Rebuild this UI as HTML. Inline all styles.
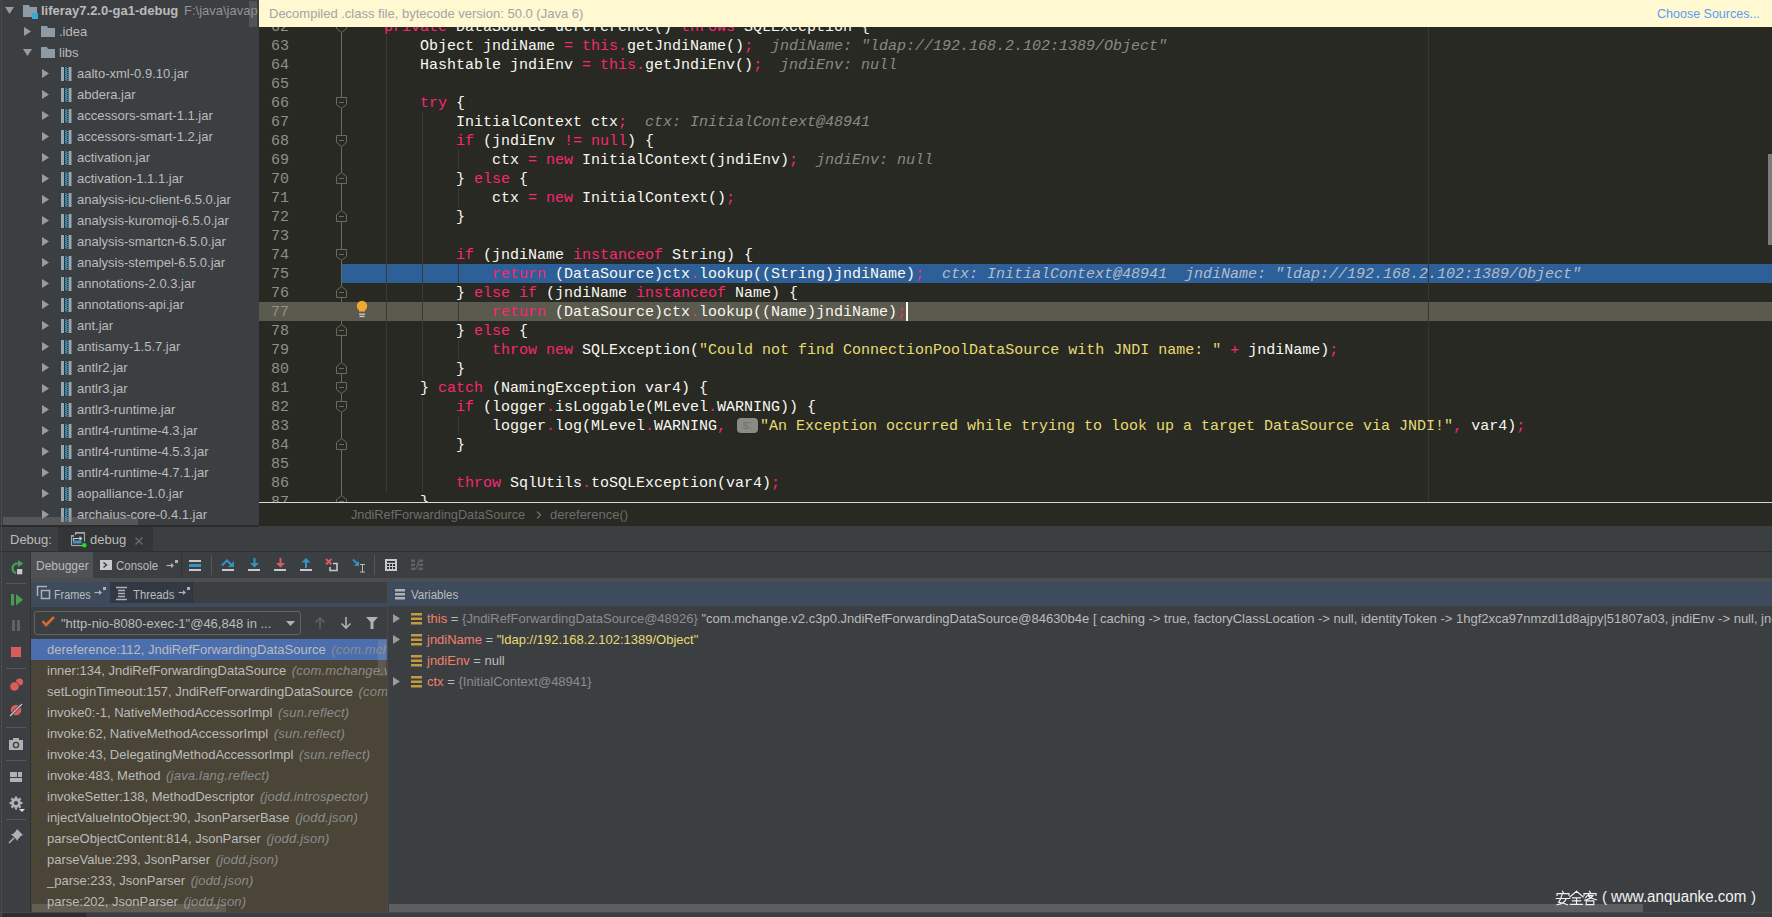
<!DOCTYPE html><html><head><meta charset="utf-8"><style>
*{margin:0;padding:0;box-sizing:border-box}
html,body{width:1772px;height:917px;overflow:hidden;background:#3c3f41;position:relative;font-family:"Liberation Sans",sans-serif;font-size:13px;color:#bbbbbb}
.a{position:absolute}
.code{position:absolute;font-family:"Liberation Mono",monospace;font-size:15px;line-height:19px;white-space:pre;color:#f8f8f2;height:19px}
.k{color:#f92672}
.s{color:#e6db74}
.hint{position:absolute;font-family:"Liberation Mono",monospace;font-size:15px;line-height:19px;white-space:pre;color:#8b8a80;font-style:italic;height:19px}
.ln{position:absolute;font-family:"Liberation Mono",monospace;font-size:15px;line-height:19px;color:#8f908a;width:40px;text-align:right;left:249px;height:19px}
.tr{position:absolute;white-space:pre;line-height:21px;height:21px}
.guide{position:absolute;width:1px;background:#3b3a32}
</style></head><body>
<div class="a" style="left:0;top:0;width:259px;height:526px;background:#3c3f41;overflow:hidden">
<svg class="a" style="left:5px;top:6px" width="10" height="10"><path d="M0 1 L9 1 L4.5 8 Z" fill="#9b9b9b"/></svg>
<svg class="a" style="left:23px;top:5px" width="18" height="14"><path d="M0 0 H6 L7 2 H14 V12 H0 Z" fill="#8e9ba4"/><rect x="9" y="8" width="6" height="6" fill="#3aa8d8"/></svg>
<div class="tr" style="left:41px;top:0px;font-weight:bold;color:#bbbbbb">liferay7.2.0-ga1-debug</div>
<div class="tr" style="left:184px;top:0px;color:#939393;transform:scaleX(1.0);transform-origin:0 0">F:\java\javap</div>
<svg class="a" style="left:23px;top:27px" width="10" height="10"><path d="M1 0 L8 4.5 L1 9 Z" fill="#9b9b9b"/></svg>
<svg class="a" style="left:41px;top:25px" width="16" height="14"><path d="M0 1 H6 L7 3 H14 V12 H0 Z" fill="#8e9ba4"/></svg>
<div class="tr" style="left:59px;top:21px">.idea</div>
<svg class="a" style="left:23px;top:48px" width="10" height="10"><path d="M0 1 L9 1 L4.5 8 Z" fill="#9b9b9b"/></svg>
<svg class="a" style="left:41px;top:46px" width="16" height="14"><path d="M0 1 H6 L7 3 H14 V12 H0 Z" fill="#8e9ba4"/></svg>
<div class="tr" style="left:59px;top:42px">libs</div>
<svg class="a" style="left:41px;top:69px" width="10" height="10"><path d="M1 0 L8 4.5 L1 9 Z" fill="#9b9b9b"/></svg>
<svg class="a" style="left:61px;top:67px" width="11" height="15"><rect x="0" y="0" width="10.5" height="14" fill="#9aa7b0"/><rect x="3" y="0" width="4.5" height="14" fill="#2f3336"/><path d="M4 0.5 L6.5 1.5 L4 2.5 L6.5 3.5 L4 4.5 L6.5 5.5 L4 6.5 L6.5 7.5 L4 8.5 L6.5 9.5 L4 10.5 L6.5 11.5 L4 12.5 L6.5 13.5" fill="none" stroke="#3aa8d8" stroke-width="1"/></svg>
<div class="tr" style="left:77px;top:63px">aalto-xml-0.9.10.jar</div>
<svg class="a" style="left:41px;top:90px" width="10" height="10"><path d="M1 0 L8 4.5 L1 9 Z" fill="#9b9b9b"/></svg>
<svg class="a" style="left:61px;top:88px" width="11" height="15"><rect x="0" y="0" width="10.5" height="14" fill="#9aa7b0"/><rect x="3" y="0" width="4.5" height="14" fill="#2f3336"/><path d="M4 0.5 L6.5 1.5 L4 2.5 L6.5 3.5 L4 4.5 L6.5 5.5 L4 6.5 L6.5 7.5 L4 8.5 L6.5 9.5 L4 10.5 L6.5 11.5 L4 12.5 L6.5 13.5" fill="none" stroke="#3aa8d8" stroke-width="1"/></svg>
<div class="tr" style="left:77px;top:84px">abdera.jar</div>
<svg class="a" style="left:41px;top:111px" width="10" height="10"><path d="M1 0 L8 4.5 L1 9 Z" fill="#9b9b9b"/></svg>
<svg class="a" style="left:61px;top:109px" width="11" height="15"><rect x="0" y="0" width="10.5" height="14" fill="#9aa7b0"/><rect x="3" y="0" width="4.5" height="14" fill="#2f3336"/><path d="M4 0.5 L6.5 1.5 L4 2.5 L6.5 3.5 L4 4.5 L6.5 5.5 L4 6.5 L6.5 7.5 L4 8.5 L6.5 9.5 L4 10.5 L6.5 11.5 L4 12.5 L6.5 13.5" fill="none" stroke="#3aa8d8" stroke-width="1"/></svg>
<div class="tr" style="left:77px;top:105px">accessors-smart-1.1.jar</div>
<svg class="a" style="left:41px;top:132px" width="10" height="10"><path d="M1 0 L8 4.5 L1 9 Z" fill="#9b9b9b"/></svg>
<svg class="a" style="left:61px;top:130px" width="11" height="15"><rect x="0" y="0" width="10.5" height="14" fill="#9aa7b0"/><rect x="3" y="0" width="4.5" height="14" fill="#2f3336"/><path d="M4 0.5 L6.5 1.5 L4 2.5 L6.5 3.5 L4 4.5 L6.5 5.5 L4 6.5 L6.5 7.5 L4 8.5 L6.5 9.5 L4 10.5 L6.5 11.5 L4 12.5 L6.5 13.5" fill="none" stroke="#3aa8d8" stroke-width="1"/></svg>
<div class="tr" style="left:77px;top:126px">accessors-smart-1.2.jar</div>
<svg class="a" style="left:41px;top:153px" width="10" height="10"><path d="M1 0 L8 4.5 L1 9 Z" fill="#9b9b9b"/></svg>
<svg class="a" style="left:61px;top:151px" width="11" height="15"><rect x="0" y="0" width="10.5" height="14" fill="#9aa7b0"/><rect x="3" y="0" width="4.5" height="14" fill="#2f3336"/><path d="M4 0.5 L6.5 1.5 L4 2.5 L6.5 3.5 L4 4.5 L6.5 5.5 L4 6.5 L6.5 7.5 L4 8.5 L6.5 9.5 L4 10.5 L6.5 11.5 L4 12.5 L6.5 13.5" fill="none" stroke="#3aa8d8" stroke-width="1"/></svg>
<div class="tr" style="left:77px;top:147px">activation.jar</div>
<svg class="a" style="left:41px;top:174px" width="10" height="10"><path d="M1 0 L8 4.5 L1 9 Z" fill="#9b9b9b"/></svg>
<svg class="a" style="left:61px;top:172px" width="11" height="15"><rect x="0" y="0" width="10.5" height="14" fill="#9aa7b0"/><rect x="3" y="0" width="4.5" height="14" fill="#2f3336"/><path d="M4 0.5 L6.5 1.5 L4 2.5 L6.5 3.5 L4 4.5 L6.5 5.5 L4 6.5 L6.5 7.5 L4 8.5 L6.5 9.5 L4 10.5 L6.5 11.5 L4 12.5 L6.5 13.5" fill="none" stroke="#3aa8d8" stroke-width="1"/></svg>
<div class="tr" style="left:77px;top:168px">activation-1.1.1.jar</div>
<svg class="a" style="left:41px;top:195px" width="10" height="10"><path d="M1 0 L8 4.5 L1 9 Z" fill="#9b9b9b"/></svg>
<svg class="a" style="left:61px;top:193px" width="11" height="15"><rect x="0" y="0" width="10.5" height="14" fill="#9aa7b0"/><rect x="3" y="0" width="4.5" height="14" fill="#2f3336"/><path d="M4 0.5 L6.5 1.5 L4 2.5 L6.5 3.5 L4 4.5 L6.5 5.5 L4 6.5 L6.5 7.5 L4 8.5 L6.5 9.5 L4 10.5 L6.5 11.5 L4 12.5 L6.5 13.5" fill="none" stroke="#3aa8d8" stroke-width="1"/></svg>
<div class="tr" style="left:77px;top:189px">analysis-icu-client-6.5.0.jar</div>
<svg class="a" style="left:41px;top:216px" width="10" height="10"><path d="M1 0 L8 4.5 L1 9 Z" fill="#9b9b9b"/></svg>
<svg class="a" style="left:61px;top:214px" width="11" height="15"><rect x="0" y="0" width="10.5" height="14" fill="#9aa7b0"/><rect x="3" y="0" width="4.5" height="14" fill="#2f3336"/><path d="M4 0.5 L6.5 1.5 L4 2.5 L6.5 3.5 L4 4.5 L6.5 5.5 L4 6.5 L6.5 7.5 L4 8.5 L6.5 9.5 L4 10.5 L6.5 11.5 L4 12.5 L6.5 13.5" fill="none" stroke="#3aa8d8" stroke-width="1"/></svg>
<div class="tr" style="left:77px;top:210px">analysis-kuromoji-6.5.0.jar</div>
<svg class="a" style="left:41px;top:237px" width="10" height="10"><path d="M1 0 L8 4.5 L1 9 Z" fill="#9b9b9b"/></svg>
<svg class="a" style="left:61px;top:235px" width="11" height="15"><rect x="0" y="0" width="10.5" height="14" fill="#9aa7b0"/><rect x="3" y="0" width="4.5" height="14" fill="#2f3336"/><path d="M4 0.5 L6.5 1.5 L4 2.5 L6.5 3.5 L4 4.5 L6.5 5.5 L4 6.5 L6.5 7.5 L4 8.5 L6.5 9.5 L4 10.5 L6.5 11.5 L4 12.5 L6.5 13.5" fill="none" stroke="#3aa8d8" stroke-width="1"/></svg>
<div class="tr" style="left:77px;top:231px">analysis-smartcn-6.5.0.jar</div>
<svg class="a" style="left:41px;top:258px" width="10" height="10"><path d="M1 0 L8 4.5 L1 9 Z" fill="#9b9b9b"/></svg>
<svg class="a" style="left:61px;top:256px" width="11" height="15"><rect x="0" y="0" width="10.5" height="14" fill="#9aa7b0"/><rect x="3" y="0" width="4.5" height="14" fill="#2f3336"/><path d="M4 0.5 L6.5 1.5 L4 2.5 L6.5 3.5 L4 4.5 L6.5 5.5 L4 6.5 L6.5 7.5 L4 8.5 L6.5 9.5 L4 10.5 L6.5 11.5 L4 12.5 L6.5 13.5" fill="none" stroke="#3aa8d8" stroke-width="1"/></svg>
<div class="tr" style="left:77px;top:252px">analysis-stempel-6.5.0.jar</div>
<svg class="a" style="left:41px;top:279px" width="10" height="10"><path d="M1 0 L8 4.5 L1 9 Z" fill="#9b9b9b"/></svg>
<svg class="a" style="left:61px;top:277px" width="11" height="15"><rect x="0" y="0" width="10.5" height="14" fill="#9aa7b0"/><rect x="3" y="0" width="4.5" height="14" fill="#2f3336"/><path d="M4 0.5 L6.5 1.5 L4 2.5 L6.5 3.5 L4 4.5 L6.5 5.5 L4 6.5 L6.5 7.5 L4 8.5 L6.5 9.5 L4 10.5 L6.5 11.5 L4 12.5 L6.5 13.5" fill="none" stroke="#3aa8d8" stroke-width="1"/></svg>
<div class="tr" style="left:77px;top:273px">annotations-2.0.3.jar</div>
<svg class="a" style="left:41px;top:300px" width="10" height="10"><path d="M1 0 L8 4.5 L1 9 Z" fill="#9b9b9b"/></svg>
<svg class="a" style="left:61px;top:298px" width="11" height="15"><rect x="0" y="0" width="10.5" height="14" fill="#9aa7b0"/><rect x="3" y="0" width="4.5" height="14" fill="#2f3336"/><path d="M4 0.5 L6.5 1.5 L4 2.5 L6.5 3.5 L4 4.5 L6.5 5.5 L4 6.5 L6.5 7.5 L4 8.5 L6.5 9.5 L4 10.5 L6.5 11.5 L4 12.5 L6.5 13.5" fill="none" stroke="#3aa8d8" stroke-width="1"/></svg>
<div class="tr" style="left:77px;top:294px">annotations-api.jar</div>
<svg class="a" style="left:41px;top:321px" width="10" height="10"><path d="M1 0 L8 4.5 L1 9 Z" fill="#9b9b9b"/></svg>
<svg class="a" style="left:61px;top:319px" width="11" height="15"><rect x="0" y="0" width="10.5" height="14" fill="#9aa7b0"/><rect x="3" y="0" width="4.5" height="14" fill="#2f3336"/><path d="M4 0.5 L6.5 1.5 L4 2.5 L6.5 3.5 L4 4.5 L6.5 5.5 L4 6.5 L6.5 7.5 L4 8.5 L6.5 9.5 L4 10.5 L6.5 11.5 L4 12.5 L6.5 13.5" fill="none" stroke="#3aa8d8" stroke-width="1"/></svg>
<div class="tr" style="left:77px;top:315px">ant.jar</div>
<svg class="a" style="left:41px;top:342px" width="10" height="10"><path d="M1 0 L8 4.5 L1 9 Z" fill="#9b9b9b"/></svg>
<svg class="a" style="left:61px;top:340px" width="11" height="15"><rect x="0" y="0" width="10.5" height="14" fill="#9aa7b0"/><rect x="3" y="0" width="4.5" height="14" fill="#2f3336"/><path d="M4 0.5 L6.5 1.5 L4 2.5 L6.5 3.5 L4 4.5 L6.5 5.5 L4 6.5 L6.5 7.5 L4 8.5 L6.5 9.5 L4 10.5 L6.5 11.5 L4 12.5 L6.5 13.5" fill="none" stroke="#3aa8d8" stroke-width="1"/></svg>
<div class="tr" style="left:77px;top:336px">antisamy-1.5.7.jar</div>
<svg class="a" style="left:41px;top:363px" width="10" height="10"><path d="M1 0 L8 4.5 L1 9 Z" fill="#9b9b9b"/></svg>
<svg class="a" style="left:61px;top:361px" width="11" height="15"><rect x="0" y="0" width="10.5" height="14" fill="#9aa7b0"/><rect x="3" y="0" width="4.5" height="14" fill="#2f3336"/><path d="M4 0.5 L6.5 1.5 L4 2.5 L6.5 3.5 L4 4.5 L6.5 5.5 L4 6.5 L6.5 7.5 L4 8.5 L6.5 9.5 L4 10.5 L6.5 11.5 L4 12.5 L6.5 13.5" fill="none" stroke="#3aa8d8" stroke-width="1"/></svg>
<div class="tr" style="left:77px;top:357px">antlr2.jar</div>
<svg class="a" style="left:41px;top:384px" width="10" height="10"><path d="M1 0 L8 4.5 L1 9 Z" fill="#9b9b9b"/></svg>
<svg class="a" style="left:61px;top:382px" width="11" height="15"><rect x="0" y="0" width="10.5" height="14" fill="#9aa7b0"/><rect x="3" y="0" width="4.5" height="14" fill="#2f3336"/><path d="M4 0.5 L6.5 1.5 L4 2.5 L6.5 3.5 L4 4.5 L6.5 5.5 L4 6.5 L6.5 7.5 L4 8.5 L6.5 9.5 L4 10.5 L6.5 11.5 L4 12.5 L6.5 13.5" fill="none" stroke="#3aa8d8" stroke-width="1"/></svg>
<div class="tr" style="left:77px;top:378px">antlr3.jar</div>
<svg class="a" style="left:41px;top:405px" width="10" height="10"><path d="M1 0 L8 4.5 L1 9 Z" fill="#9b9b9b"/></svg>
<svg class="a" style="left:61px;top:403px" width="11" height="15"><rect x="0" y="0" width="10.5" height="14" fill="#9aa7b0"/><rect x="3" y="0" width="4.5" height="14" fill="#2f3336"/><path d="M4 0.5 L6.5 1.5 L4 2.5 L6.5 3.5 L4 4.5 L6.5 5.5 L4 6.5 L6.5 7.5 L4 8.5 L6.5 9.5 L4 10.5 L6.5 11.5 L4 12.5 L6.5 13.5" fill="none" stroke="#3aa8d8" stroke-width="1"/></svg>
<div class="tr" style="left:77px;top:399px">antlr3-runtime.jar</div>
<svg class="a" style="left:41px;top:426px" width="10" height="10"><path d="M1 0 L8 4.5 L1 9 Z" fill="#9b9b9b"/></svg>
<svg class="a" style="left:61px;top:424px" width="11" height="15"><rect x="0" y="0" width="10.5" height="14" fill="#9aa7b0"/><rect x="3" y="0" width="4.5" height="14" fill="#2f3336"/><path d="M4 0.5 L6.5 1.5 L4 2.5 L6.5 3.5 L4 4.5 L6.5 5.5 L4 6.5 L6.5 7.5 L4 8.5 L6.5 9.5 L4 10.5 L6.5 11.5 L4 12.5 L6.5 13.5" fill="none" stroke="#3aa8d8" stroke-width="1"/></svg>
<div class="tr" style="left:77px;top:420px">antlr4-runtime-4.3.jar</div>
<svg class="a" style="left:41px;top:447px" width="10" height="10"><path d="M1 0 L8 4.5 L1 9 Z" fill="#9b9b9b"/></svg>
<svg class="a" style="left:61px;top:445px" width="11" height="15"><rect x="0" y="0" width="10.5" height="14" fill="#9aa7b0"/><rect x="3" y="0" width="4.5" height="14" fill="#2f3336"/><path d="M4 0.5 L6.5 1.5 L4 2.5 L6.5 3.5 L4 4.5 L6.5 5.5 L4 6.5 L6.5 7.5 L4 8.5 L6.5 9.5 L4 10.5 L6.5 11.5 L4 12.5 L6.5 13.5" fill="none" stroke="#3aa8d8" stroke-width="1"/></svg>
<div class="tr" style="left:77px;top:441px">antlr4-runtime-4.5.3.jar</div>
<svg class="a" style="left:41px;top:468px" width="10" height="10"><path d="M1 0 L8 4.5 L1 9 Z" fill="#9b9b9b"/></svg>
<svg class="a" style="left:61px;top:466px" width="11" height="15"><rect x="0" y="0" width="10.5" height="14" fill="#9aa7b0"/><rect x="3" y="0" width="4.5" height="14" fill="#2f3336"/><path d="M4 0.5 L6.5 1.5 L4 2.5 L6.5 3.5 L4 4.5 L6.5 5.5 L4 6.5 L6.5 7.5 L4 8.5 L6.5 9.5 L4 10.5 L6.5 11.5 L4 12.5 L6.5 13.5" fill="none" stroke="#3aa8d8" stroke-width="1"/></svg>
<div class="tr" style="left:77px;top:462px">antlr4-runtime-4.7.1.jar</div>
<svg class="a" style="left:41px;top:489px" width="10" height="10"><path d="M1 0 L8 4.5 L1 9 Z" fill="#9b9b9b"/></svg>
<svg class="a" style="left:61px;top:487px" width="11" height="15"><rect x="0" y="0" width="10.5" height="14" fill="#9aa7b0"/><rect x="3" y="0" width="4.5" height="14" fill="#2f3336"/><path d="M4 0.5 L6.5 1.5 L4 2.5 L6.5 3.5 L4 4.5 L6.5 5.5 L4 6.5 L6.5 7.5 L4 8.5 L6.5 9.5 L4 10.5 L6.5 11.5 L4 12.5 L6.5 13.5" fill="none" stroke="#3aa8d8" stroke-width="1"/></svg>
<div class="tr" style="left:77px;top:483px">aopalliance-1.0.jar</div>
<svg class="a" style="left:41px;top:510px" width="10" height="10"><path d="M1 0 L8 4.5 L1 9 Z" fill="#9b9b9b"/></svg>
<svg class="a" style="left:61px;top:508px" width="11" height="15"><rect x="0" y="0" width="10.5" height="14" fill="#9aa7b0"/><rect x="3" y="0" width="4.5" height="14" fill="#2f3336"/><path d="M4 0.5 L6.5 1.5 L4 2.5 L6.5 3.5 L4 4.5 L6.5 5.5 L4 6.5 L6.5 7.5 L4 8.5 L6.5 9.5 L4 10.5 L6.5 11.5 L4 12.5 L6.5 13.5" fill="none" stroke="#3aa8d8" stroke-width="1"/></svg>
<div class="tr" style="left:77px;top:504px">archaius-core-0.4.1.jar</div>
<div class="a" style="left:249px;top:1px;width:8px;height:26px;background:rgba(130,130,130,0.32)"></div>
<div class="a" style="left:3px;top:517px;width:135px;height:8px;background:rgba(130,130,130,0.35)"></div>
</div>
<div class="a" style="left:259px;top:0;width:1513px;height:503px;background:#282923;overflow:hidden">
</div>
<div class="a" style="left:341px;top:27px;width:1px;height:475px;background:#6b6a5c"></div>
<svg class="a" style="left:334px;top:17px" width="16" height="19"><path d="M2.5 4.5 H12.5 V11.5 L7.5 15.5 L2.5 11.5 Z" fill="#282923" stroke="#6b6a5c"/><path d="M5 9.5 H10" stroke="#6b6a5c"/></svg>
<svg class="a" style="left:334px;top:93px" width="16" height="19"><path d="M2.5 4.5 H12.5 V11.5 L7.5 15.5 L2.5 11.5 Z" fill="#282923" stroke="#6b6a5c"/><path d="M5 9.5 H10" stroke="#6b6a5c"/></svg>
<svg class="a" style="left:334px;top:131px" width="16" height="19"><path d="M2.5 4.5 H12.5 V11.5 L7.5 15.5 L2.5 11.5 Z" fill="#282923" stroke="#6b6a5c"/><path d="M5 9.5 H10" stroke="#6b6a5c"/></svg>
<svg class="a" style="left:334px;top:245px" width="16" height="19"><path d="M2.5 4.5 H12.5 V11.5 L7.5 15.5 L2.5 11.5 Z" fill="#282923" stroke="#6b6a5c"/><path d="M5 9.5 H10" stroke="#6b6a5c"/></svg>
<svg class="a" style="left:334px;top:378px" width="16" height="19"><path d="M2.5 4.5 H12.5 V11.5 L7.5 15.5 L2.5 11.5 Z" fill="#282923" stroke="#6b6a5c"/><path d="M5 9.5 H10" stroke="#6b6a5c"/></svg>
<svg class="a" style="left:334px;top:397px" width="16" height="19"><path d="M2.5 4.5 H12.5 V11.5 L7.5 15.5 L2.5 11.5 Z" fill="#282923" stroke="#6b6a5c"/><path d="M5 9.5 H10" stroke="#6b6a5c"/></svg>
<svg class="a" style="left:334px;top:169px" width="16" height="19"><path d="M2.5 14.5 V7.5 L7.5 3.5 L12.5 7.5 V14.5 Z" fill="#282923" stroke="#6b6a5c"/><path d="M5 9.5 H10" stroke="#6b6a5c"/></svg>
<svg class="a" style="left:334px;top:207px" width="16" height="19"><path d="M2.5 14.5 V7.5 L7.5 3.5 L12.5 7.5 V14.5 Z" fill="#282923" stroke="#6b6a5c"/><path d="M5 9.5 H10" stroke="#6b6a5c"/></svg>
<svg class="a" style="left:334px;top:283px" width="16" height="19"><path d="M2.5 14.5 V7.5 L7.5 3.5 L12.5 7.5 V14.5 Z" fill="#282923" stroke="#6b6a5c"/><path d="M5 9.5 H10" stroke="#6b6a5c"/></svg>
<svg class="a" style="left:334px;top:321px" width="16" height="19"><path d="M2.5 14.5 V7.5 L7.5 3.5 L12.5 7.5 V14.5 Z" fill="#282923" stroke="#6b6a5c"/><path d="M5 9.5 H10" stroke="#6b6a5c"/></svg>
<svg class="a" style="left:334px;top:359px" width="16" height="19"><path d="M2.5 14.5 V7.5 L7.5 3.5 L12.5 7.5 V14.5 Z" fill="#282923" stroke="#6b6a5c"/><path d="M5 9.5 H10" stroke="#6b6a5c"/></svg>
<svg class="a" style="left:334px;top:435px" width="16" height="19"><path d="M2.5 14.5 V7.5 L7.5 3.5 L12.5 7.5 V14.5 Z" fill="#282923" stroke="#6b6a5c"/><path d="M5 9.5 H10" stroke="#6b6a5c"/></svg>
<svg class="a" style="left:334px;top:492px" width="16" height="19"><path d="M2.5 14.5 V7.5 L7.5 3.5 L12.5 7.5 V14.5 Z" fill="#282923" stroke="#6b6a5c"/><path d="M5 9.5 H10" stroke="#6b6a5c"/></svg>
<div class="a" style="left:259px;top:302px;width:1513px;height:19px;background:#5b5a4e"></div>
<div class="a" style="left:342px;top:264px;width:1430px;height:19px;background:#2d6099"></div>
<div class="a" style="left:1428px;top:27px;width:1px;height:475px;background:#36363a"></div>
<div class="guide" style="left:386px;top:36px;height:19px"></div>
<div class="guide" style="left:386px;top:55px;height:19px"></div>
<div class="guide" style="left:386px;top:74px;height:19px"></div>
<div class="guide" style="left:386px;top:93px;height:19px"></div>
<div class="guide" style="left:386px;top:112px;height:19px"></div>
<div class="guide" style="left:386px;top:131px;height:19px"></div>
<div class="guide" style="left:386px;top:150px;height:19px"></div>
<div class="guide" style="left:386px;top:169px;height:19px"></div>
<div class="guide" style="left:386px;top:188px;height:19px"></div>
<div class="guide" style="left:386px;top:207px;height:19px"></div>
<div class="guide" style="left:386px;top:226px;height:19px"></div>
<div class="guide" style="left:386px;top:245px;height:19px"></div>
<div class="guide" style="left:386px;top:264px;height:19px"></div>
<div class="guide" style="left:386px;top:283px;height:19px"></div>
<div class="guide" style="left:386px;top:302px;height:19px"></div>
<div class="guide" style="left:386px;top:321px;height:19px"></div>
<div class="guide" style="left:386px;top:340px;height:19px"></div>
<div class="guide" style="left:386px;top:359px;height:19px"></div>
<div class="guide" style="left:386px;top:378px;height:19px"></div>
<div class="guide" style="left:386px;top:397px;height:19px"></div>
<div class="guide" style="left:386px;top:416px;height:19px"></div>
<div class="guide" style="left:386px;top:435px;height:19px"></div>
<div class="guide" style="left:386px;top:454px;height:19px"></div>
<div class="guide" style="left:386px;top:473px;height:19px"></div>
<div class="guide" style="left:422px;top:112px;height:19px"></div>
<div class="guide" style="left:422px;top:131px;height:19px"></div>
<div class="guide" style="left:422px;top:150px;height:19px"></div>
<div class="guide" style="left:422px;top:169px;height:19px"></div>
<div class="guide" style="left:422px;top:188px;height:19px"></div>
<div class="guide" style="left:422px;top:207px;height:19px"></div>
<div class="guide" style="left:422px;top:226px;height:19px"></div>
<div class="guide" style="left:422px;top:245px;height:19px"></div>
<div class="guide" style="left:422px;top:264px;height:19px"></div>
<div class="guide" style="left:422px;top:283px;height:19px"></div>
<div class="guide" style="left:422px;top:302px;height:19px"></div>
<div class="guide" style="left:422px;top:321px;height:19px"></div>
<div class="guide" style="left:422px;top:340px;height:19px"></div>
<div class="guide" style="left:422px;top:359px;height:19px"></div>
<div class="guide" style="left:422px;top:397px;height:19px"></div>
<div class="guide" style="left:422px;top:416px;height:19px"></div>
<div class="guide" style="left:422px;top:435px;height:19px"></div>
<div class="guide" style="left:422px;top:454px;height:19px"></div>
<div class="guide" style="left:422px;top:473px;height:19px"></div>
<div class="guide" style="left:458px;top:150px;height:19px"></div>
<div class="guide" style="left:458px;top:188px;height:19px"></div>
<div class="guide" style="left:458px;top:264px;height:19px"></div>
<div class="guide" style="left:458px;top:302px;height:19px"></div>
<div class="guide" style="left:458px;top:340px;height:19px"></div>
<div class="guide" style="left:458px;top:416px;height:19px"></div>
<div class="ln" style="top:18px">62</div>
<div class="code" style="left:384px;top:18px"><span class="k">private</span> DataSource dereference() <span class="k">throws</span> SQLException {</div>
<div class="ln" style="top:37px">63</div>
<div class="code" style="left:420px;top:37px">Object jndiName <span class="k">=</span> <span class="k">this</span><span class="k">.</span>getJndiName()<span class="k">;</span></div>
<div class="hint" style="left:771px;top:37px">jndiName: &quot;ldap://192.168.2.102:1389/Object&quot;</div>
<div class="ln" style="top:56px">64</div>
<div class="code" style="left:420px;top:56px">Hashtable jndiEnv <span class="k">=</span> <span class="k">this</span><span class="k">.</span>getJndiEnv()<span class="k">;</span></div>
<div class="hint" style="left:780px;top:56px">jndiEnv: null</div>
<div class="ln" style="top:75px">65</div>
<div class="code" style="left:348px;top:75px"></div>
<div class="ln" style="top:94px">66</div>
<div class="code" style="left:420px;top:94px"><span class="k">try</span> {</div>
<div class="ln" style="top:113px">67</div>
<div class="code" style="left:456px;top:113px">InitialContext ctx<span class="k">;</span></div>
<div class="hint" style="left:645px;top:113px">ctx: InitialContext@48941</div>
<div class="ln" style="top:132px">68</div>
<div class="code" style="left:456px;top:132px"><span class="k">if</span> (jndiEnv <span class="k">!=</span> <span class="k">null</span>) {</div>
<div class="ln" style="top:151px">69</div>
<div class="code" style="left:492px;top:151px">ctx <span class="k">=</span> <span class="k">new</span> InitialContext(jndiEnv)<span class="k">;</span></div>
<div class="hint" style="left:816px;top:151px">jndiEnv: null</div>
<div class="ln" style="top:170px">70</div>
<div class="code" style="left:456px;top:170px">} <span class="k">else</span> {</div>
<div class="ln" style="top:189px">71</div>
<div class="code" style="left:492px;top:189px">ctx <span class="k">=</span> <span class="k">new</span> InitialContext()<span class="k">;</span></div>
<div class="ln" style="top:208px">72</div>
<div class="code" style="left:456px;top:208px">}</div>
<div class="ln" style="top:227px">73</div>
<div class="code" style="left:348px;top:227px"></div>
<div class="ln" style="top:246px">74</div>
<div class="code" style="left:456px;top:246px"><span class="k">if</span> (jndiName <span class="k">instanceof</span> String) {</div>
<div class="ln" style="top:265px">75</div>
<div class="code" style="left:492px;top:265px"><span class="k">return</span> (DataSource)ctx<span class="k">.</span>lookup((String)jndiName)<span class="k">;</span></div>
<div class="hint" style="left:942px;top:265px;color:#b3bccb">ctx: InitialContext@48941</div>
<div class="hint" style="left:1185px;top:265px;color:#b3bccb">jndiName: &quot;ldap://192.168.2.102:1389/Object&quot;</div>
<div class="ln" style="top:284px">76</div>
<div class="code" style="left:456px;top:284px">} <span class="k">else</span> <span class="k">if</span> (jndiName <span class="k">instanceof</span> Name) {</div>
<div class="ln" style="top:303px">77</div>
<div class="code" style="left:492px;top:303px"><span class="k">return</span> (DataSource)ctx<span class="k">.</span>lookup((Name)jndiName)<span class="k">;</span></div>
<div class="ln" style="top:322px">78</div>
<div class="code" style="left:456px;top:322px">} <span class="k">else</span> {</div>
<div class="ln" style="top:341px">79</div>
<div class="code" style="left:492px;top:341px"><span class="k">throw</span> <span class="k">new</span> SQLException(<span class="s">&quot;Could not find ConnectionPoolDataSource with JNDI name: &quot;</span> <span class="k">+</span> jndiName)<span class="k">;</span></div>
<div class="ln" style="top:360px">80</div>
<div class="code" style="left:456px;top:360px">}</div>
<div class="ln" style="top:379px">81</div>
<div class="code" style="left:420px;top:379px">} <span class="k">catch</span> (NamingException var4) {</div>
<div class="ln" style="top:398px">82</div>
<div class="code" style="left:456px;top:398px"><span class="k">if</span> (logger<span class="k">.</span>isLoggable(MLevel<span class="k">.</span>WARNING)) {</div>
<div class="ln" style="top:417px">83</div>
<div class="ln" style="top:436px">84</div>
<div class="code" style="left:456px;top:436px">}</div>
<div class="ln" style="top:455px">85</div>
<div class="code" style="left:348px;top:455px"></div>
<div class="ln" style="top:474px">86</div>
<div class="code" style="left:456px;top:474px"><span class="k">throw</span> SqlUtils<span class="k">.</span>toSQLException(var4)<span class="k">;</span></div>
<div class="ln" style="top:493px">87</div>
<div class="code" style="left:420px;top:493px">}</div>
<div class="code" style="left:492px;top:417px">logger<span class="k">.</span>log(MLevel<span class="k">.</span>WARNING<span class="k">,</span> </div>
<div class="a" style="left:737px;top:418px;width:21px;height:15px;background:#8b8b86;border-radius:4px;color:#6a6a66;font-size:12px;line-height:15px;text-align:center">s:</div>
<div class="code" style="left:760px;top:417px"><span class="s">&quot;An Exception occurred while trying to look up a target DataSource via JNDI!&quot;</span><span class="k">,</span> var4)<span class="k">;</span></div>
<div class="a" style="left:906px;top:302px;width:2px;height:19px;background:#f8f8f0"></div>
<svg class="a" style="left:355px;top:299px" width="14" height="20"><circle cx="7" cy="7" r="5.2" fill="#f2a72e"/><rect x="4" y="9" width="6" height="3.5" fill="#f2a72e"/><rect x="4" y="14.5" width="6" height="1.3" fill="#d0d0d0"/><rect x="4.5" y="16.8" width="5" height="1.3" fill="#d0d0d0"/></svg>
<div class="a" style="left:259px;top:0;width:1513px;height:27px;background:#fff8d0"></div>
<div class="a" style="left:269px;top:5px;white-space:pre;color:#a4a4a4;line-height:18px">Decompiled .class file, bytecode version: 50.0 (Java 6)</div>
<div class="a" style="left:1657px;top:5px;white-space:pre;color:#589df6;line-height:18px;font-size:12.5px">Choose Sources...</div>
<div class="a" style="left:1768px;top:154px;width:4px;height:91px;background:#7b7b7b"></div>
<div class="a" style="left:259px;top:502px;width:1513px;height:1px;background:#d8d8d0"></div>
<div class="a" style="left:259px;top:503px;width:1513px;height:23px;background:#282923"></div>
<div class="a" style="left:351px;top:506px;white-space:pre;color:#6e6e6a;line-height:18px;transform:scaleX(0.98);transform-origin:0 0">JndiRefForwardingDataSource</div>
<svg class="a" style="left:535px;top:509px" width="8" height="12"><path d="M2 2.5 L5.5 6 L2 9.5" fill="none" stroke="#6e6e6a" stroke-width="1.3"/></svg>
<div class="a" style="left:550px;top:506px;white-space:pre;color:#6e6e6a;line-height:18px">dereference()</div>
<div class="a" style="left:0;top:525px;width:259px;height:2px;background:#2b2b2b"></div>
<div class="a" style="left:0;top:527px;width:1772px;height:25px;background:#3c3f41"></div>
<div class="a" style="left:10px;top:531px;line-height:18px;color:#bbbbbb">Debug:</div>
<div class="a" style="left:58px;top:527px;width:95px;height:24px;background:#333537"></div>
<div class="a" style="left:90px;top:531px;line-height:18px;color:#bbbbbb">debug</div>
<svg class="a" style="left:133px;top:535px" width="12" height="12"><path d="M2.5 2.5 L9.5 9.5 M9.5 2.5 L2.5 9.5" stroke="#6a6c6e" stroke-width="1.3"/></svg>
<div class="a" style="left:0;top:551px;width:1772px;height:1px;background:#2e3032"></div>
<div class="a" style="left:2px;top:552px;width:28px;height:365px;background:#3c3f41"></div>
<div class="a" style="left:30px;top:552px;width:1px;height:365px;background:#323232"></div>
<div class="a" style="left:31px;top:552px;width:62px;height:26px;background:#4e5254"></div>
<div class="a" style="left:36px;top:557px;line-height:18px;font-size:12px;color:#bbbbbb">Debugger</div>
<div class="a" style="left:116px;top:557px;line-height:18px;font-size:12px;color:#bbbbbb;transform:scaleX(0.955);transform-origin:0 0">Console</div>
<div class="a" style="left:31px;top:578px;width:1741px;height:4px;background:#4a4e50"></div>
<div class="a" style="left:31px;top:582px;width:357px;height:25px;background:#3c3f41"></div>
<div class="a" style="left:31px;top:603px;width:357px;height:4px;background:#3d4b5c"></div>
<div class="a" style="left:31px;top:582px;width:79px;height:25px;background:#3d4b5c"></div>
<div class="a" style="left:110px;top:582px;width:82px;height:21px;background:#323844"></div>
<div class="a" style="left:54px;top:586px;line-height:18px;font-size:12px;color:#bbbbbb;transform:scaleX(0.9);transform-origin:0 0">Frames</div>
<div class="a" style="left:133px;top:586px;line-height:18px;font-size:12px;color:#bbbbbb;transform:scaleX(0.94);transform-origin:0 0">Threads</div>
<div class="a" style="left:34px;top:611px;width:267px;height:24px;border:1px solid #646464;border-radius:3px;background:#3c3f41"></div>
<div class="a" style="left:61px;top:615px;line-height:18px;color:#bbbbbb;white-space:pre">"http-nio-8080-exec-1"@46,848 in ...</div>
<div class="a" style="left:31px;top:639px;width:356px;height:273px;background:#4a4536;overflow:hidden">
<div class="a" style="left:0;top:0px;width:356px;height:21px;background:#4b6eaf"></div>
<div class="tr" style="left:16px;top:0px;color:#bbbbbb">dereference:112, JndiRefForwardingDataSource <i style="color:#8c8c8c;margin-left:2px;letter-spacing:0.2px">(com.mchange.v2.c3p0.impl)</i></div>
<div class="tr" style="left:16px;top:21px;color:#bbbbbb">inner:134, JndiRefForwardingDataSource <i style="color:#8c8c8c;margin-left:2px;letter-spacing:0.2px">(com.mchange.v2.c3p0.impl)</i></div>
<div class="tr" style="left:16px;top:42px;color:#bbbbbb">setLoginTimeout:157, JndiRefForwardingDataSource <i style="color:#8c8c8c;margin-left:2px;letter-spacing:0.2px">(com.mchange.v2.c3p0.impl)</i></div>
<div class="tr" style="left:16px;top:63px;color:#bbbbbb">invoke0:-1, NativeMethodAccessorImpl <i style="color:#8c8c8c;margin-left:2px;letter-spacing:0.2px">(sun.reflect)</i></div>
<div class="tr" style="left:16px;top:84px;color:#bbbbbb">invoke:62, NativeMethodAccessorImpl <i style="color:#8c8c8c;margin-left:2px;letter-spacing:0.2px">(sun.reflect)</i></div>
<div class="tr" style="left:16px;top:105px;color:#bbbbbb">invoke:43, DelegatingMethodAccessorImpl <i style="color:#8c8c8c;margin-left:2px;letter-spacing:0.2px">(sun.reflect)</i></div>
<div class="tr" style="left:16px;top:126px;color:#bbbbbb">invoke:483, Method <i style="color:#8c8c8c;margin-left:2px;letter-spacing:0.2px">(java.lang.reflect)</i></div>
<div class="tr" style="left:16px;top:147px;color:#bbbbbb">invokeSetter:138, MethodDescriptor <i style="color:#8c8c8c;margin-left:2px;letter-spacing:0.2px">(jodd.introspector)</i></div>
<div class="tr" style="left:16px;top:168px;color:#bbbbbb">injectValueIntoObject:90, JsonParserBase <i style="color:#8c8c8c;margin-left:2px;letter-spacing:0.2px">(jodd.json)</i></div>
<div class="tr" style="left:16px;top:189px;color:#bbbbbb">parseObjectContent:814, JsonParser <i style="color:#8c8c8c;margin-left:2px;letter-spacing:0.2px">(jodd.json)</i></div>
<div class="tr" style="left:16px;top:210px;color:#bbbbbb">parseValue:293, JsonParser <i style="color:#8c8c8c;margin-left:2px;letter-spacing:0.2px">(jodd.json)</i></div>
<div class="tr" style="left:16px;top:231px;color:#bbbbbb">_parse:233, JsonParser <i style="color:#8c8c8c;margin-left:2px;letter-spacing:0.2px">(jodd.json)</i></div>
<div class="tr" style="left:16px;top:252px;color:#bbbbbb">parse:202, JsonParser <i style="color:#8c8c8c;margin-left:2px;letter-spacing:0.2px">(jodd.json)</i></div>
<div class="a" style="left:347px;top:1px;width:8px;height:36px;background:rgba(170,170,170,0.22)"></div>
</div>
<svg class="a" style="left:70px;top:530px" width="20" height="20" viewBox="70 530 20 20"><path d="M75.5 535 V532.5 H84.5 V541.5" fill="none" stroke="#9aa7b0" stroke-width="1.2"/><rect x="75" y="532" width="10" height="1.8" fill="#9aa7b0"/><path d="M71.5 545.5 V535.5 H74" fill="none" stroke="#9aa7b0" stroke-width="1.2"/><rect x="71" y="535" width="3" height="1.8" fill="#9aa7b0"/><path d="M73.5 541 V538.5 H80" fill="none" stroke="#c8ccce" stroke-width="1.2"/><path d="M79.5 536 L82.5 538.5 L79.5 541 Z" fill="#c8ccce"/><rect x="73" y="540.5" width="8.5" height="3" fill="#4596b8"/><path d="M71.5 545.5 H82" stroke="#9aa7b0" stroke-width="1.2"/><circle cx="84.3" cy="545.3" r="2.3" fill="#22dd22"/></svg>
<svg class="a" style="left:2px;top:552px" width="28" height="365" viewBox="2 552 28 365">
<path d="M16 573 A5 5 0 0 1 16 563.5 H18.5" fill="none" stroke="#499c54" stroke-width="2.2"/>
<path d="M18 560 L23.3 563.6 L18 567.3 Z" fill="#499c54"/>
<rect x="17" y="569" width="5.3" height="5.3" fill="#c8c8c8"/>
<rect x="6" y="583" width="20" height="1" fill="#555759"/>
<rect x="11" y="594" width="3" height="11.5" fill="#499c54"/>
<path d="M16 594 L23 599.75 L16 605.5 Z" fill="#499c54"/>
<rect x="12" y="620" width="3" height="11" fill="#5f6163"/><rect x="17" y="620" width="3" height="11" fill="#5f6163"/>
<rect x="11" y="647" width="10" height="10" fill="#db5c5c"/>
<rect x="6" y="668" width="20" height="1" fill="#555759"/>
<circle cx="19.5" cy="682" r="3.6" fill="#db5c5c"/><circle cx="14.5" cy="686.5" r="4.7" fill="#db5c5c" stroke="#3c3f41" stroke-width="0.8"/>
<circle cx="16" cy="710" r="5.3" fill="#db5c5c"/><path d="M10 716 L22 704" stroke="#3c3f41" stroke-width="2.6"/><path d="M10 716 L22 704" stroke="#c8c8c8" stroke-width="1.2"/>
<rect x="6" y="727" width="20" height="1" fill="#555759"/>
<rect x="9" y="740" width="14" height="10" fill="#afb1b3"/><rect x="13" y="738" width="6" height="3" fill="#afb1b3"/><circle cx="16" cy="745" r="2.6" fill="none" stroke="#3c3f41" stroke-width="1.4"/>
<rect x="6" y="760" width="20" height="1" fill="#555759"/>
<rect x="10" y="772" width="7" height="5" fill="#afb1b3"/><rect x="18" y="772" width="4" height="5" fill="#afb1b3"/><rect x="10" y="778" width="12" height="4" fill="#afb1b3"/>
<circle cx="16" cy="803" r="3.6" fill="none" stroke="#afb1b3" stroke-width="3"/>
<path d="M16 796.5 V798.5 M16 807.5 V809.5 M9.5 803 H11.5 M20.5 803 H22.5 M11.4 798.4 L12.8 799.8 M19.2 806.2 L20.6 807.6 M11.4 807.6 L12.8 806.2 M19.2 799.8 L20.6 798.4" stroke="#afb1b3" stroke-width="2.2"/>
<path d="M19 809 H25 L22 812 Z" fill="#e0e0e0"/>
<rect x="6" y="819" width="20" height="1" fill="#555759"/>
<path d="M17 829 L23 835 L21 836 L18 839 L18 841 L11 834 L13 834 L16 831 Z" fill="#afb1b3"/><path d="M9 843 L14 838" stroke="#afb1b3" stroke-width="1.5"/>
</svg>
<svg class="a" style="left:98px;top:558px" width="20" height="14" viewBox="98 558 20 14"><rect x="100" y="560" width="12" height="10" fill="#c8c8c8"/><path d="M103.5 562.5 L106.5 565 L103.5 567.5" fill="none" stroke="#3c3f41" stroke-width="1.5"/></svg>
<svg class="a" style="left:166px;top:559px" width="14" height="10" viewBox="166 559 14 10"><path d="M166.5 565.5 H173" stroke="#afb1b3" stroke-width="1.2"/><path d="M171 563 L174 565.5 L171 568 Z" fill="#afb1b3"/><rect x="175" y="560" width="3" height="3" fill="#afb1b3"/></svg>
<div class="a" style="left:181px;top:553px;width:1px;height:25px;background:#323436"></div>
<svg class="a" style="left:188px;top:558px" width="14" height="15" viewBox="188 558 14 15"><rect x="189" y="560" width="12" height="2" fill="#c8c8c8"/><rect x="189" y="564" width="12" height="3" fill="#3592c4"/><rect x="189" y="569" width="12" height="2" fill="#c8c8c8"/></svg>
<div class="a" style="left:211px;top:555px;width:1px;height:20px;background:#555759"></div>
<div class="a" style="left:374px;top:555px;width:1px;height:20px;background:#555759"></div>
<svg class="a" style="left:218px;top:555px" width="20" height="20" viewBox="218 555 20 20"><path d="M222 565.5 L227 560.5 L231.5 565" fill="none" stroke="#3592c4" stroke-width="2"/><path d="M234 561 V567 H228 Z" fill="#3592c4"/><rect x="222" y="569" width="12" height="2" fill="#c8c8c8"/></svg>
<svg class="a" style="left:248px;top:555px" width="16" height="20" viewBox="248 555 16 20"><rect x="253.5" y="558" width="2" height="6" fill="#3592c4"/><path d="M250 563 H259 L254.5 567.5 Z" fill="#3592c4"/><rect x="248" y="569" width="12" height="2" fill="#c8c8c8"/></svg>
<svg class="a" style="left:274px;top:555px" width="16" height="20" viewBox="274 555 16 20"><rect x="279.5" y="558" width="2" height="6" fill="#db5c5c"/><path d="M276 563 H285 L280.5 567.5 Z" fill="#db5c5c"/><rect x="274" y="569" width="12" height="2" fill="#c8c8c8"/></svg>
<svg class="a" style="left:298px;top:555px" width="16" height="20" viewBox="298 555 16 20"><rect x="305" y="562" width="2" height="6" fill="#3592c4"/><path d="M301.5 562.5 H310.5 L306 558 Z" fill="#3592c4"/><rect x="300" y="569" width="12" height="2" fill="#c8c8c8"/></svg>
<svg class="a" style="left:323px;top:555px" width="18" height="20" viewBox="323 555 18 20"><path d="M326 559 L331.5 564.5 M331.5 559 L326 564.5" stroke="#db5c5c" stroke-width="1.8"/><path d="M333 563.5 H337 V570.5 H330 V567" fill="none" stroke="#c8c8c8" stroke-width="1.6"/></svg>
<svg class="a" style="left:350px;top:555px" width="18" height="20" viewBox="350 555 18 20"><path d="M353 559.5 L358 564.5" stroke="#3592c4" stroke-width="1.8"/><path d="M359 561 V566 H354 Z" fill="#3592c4"/><path d="M360 564.5 H365 M362.5 564.5 V572 M360 572 H365" stroke="#c8c8c8" stroke-width="0.9"/></svg>
<svg class="a" style="left:384px;top:557px" width="16" height="16" viewBox="384 557 16 16"><rect x="385" y="559" width="12" height="12" fill="#c8c8c8"/><rect x="387" y="561" width="8" height="1.7" fill="#2b2d2f"/><path d="M387 564 h2 v2 h-2z M390 564 h2 v2 h-2z M393 564 h2 v2 h-2z M387 567 h2 v2 h-2z M390 567 h2 v2 h-2z M393 567 h2 v2 h-2z" fill="#2b2d2f"/></svg>
<svg class="a" style="left:410px;top:557px" width="16" height="16" viewBox="410 557 16 16"><path d="M411 560.7 H415 M418.5 560.7 H423 M411 564.7 H415 M418.5 564.7 H423 M411 568.7 H415 M418.5 568.7 H423" stroke="#5f6163" stroke-width="2.4"/><path d="M420.5 560.5 C418 560.5 418 563 417.5 565 C417 567 416.5 569 415 569" fill="none" stroke="#5f6163" stroke-width="1.3"/></svg>
<svg class="a" style="left:36px;top:585px" width="16" height="18" viewBox="36 585 16 18"><rect x="41.5" y="590.5" width="8" height="8" fill="none" stroke="#afb1b3" stroke-width="1.5"/><path d="M37.5 596 V586.5 H47" fill="none" stroke="#afb1b3" stroke-width="1.5"/></svg>
<svg class="a" style="left:94px;top:586px" width="14" height="10" viewBox="94 586 14 10"><path d="M94.5 592.5 H101" stroke="#afb1b3" stroke-width="1.2"/><path d="M99 590 L102 592.5 L99 595 Z" fill="#afb1b3"/><rect x="103" y="587" width="3" height="3" fill="#afb1b3"/></svg>
<svg class="a" style="left:115px;top:586px" width="14" height="16" viewBox="115 586 14 16"><path d="M116 587.5 H127 M116 599.5 H127" stroke="#afb1b3" stroke-width="1.5"/><path d="M118 590.5 H125 M118 593.5 H125 M118 596.5 H125" stroke="#afb1b3" stroke-width="1.5"/></svg>
<svg class="a" style="left:178px;top:586px" width="14" height="10" viewBox="178 586 14 10"><path d="M178.5 592.5 H185" stroke="#afb1b3" stroke-width="1.2"/><path d="M183 590 L186 592.5 L183 595 Z" fill="#afb1b3"/><rect x="187" y="587" width="3" height="3" fill="#afb1b3"/></svg>
<div class="a" style="left:192px;top:582px;width:1px;height:21px;background:#2e3236"></div>
<svg class="a" style="left:38px;top:612px" width="20" height="20" viewBox="38 612 20 20"><path d="M42.5 621 L46 625 L54 617" fill="none" stroke="#d9692a" stroke-width="2.6"/></svg>
<svg class="a" style="left:284px;top:618px" width="14" height="10" viewBox="284 618 14 10"><path d="M286 621 H295 L290.5 626 Z" fill="#afb1b3"/></svg>
<svg class="a" style="left:313px;top:615px" width="14" height="16" viewBox="313 615 14 16"><path d="M320 618 V629 M315.5 622.5 L320 618 L324.5 622.5" fill="none" stroke="#5f6163" stroke-width="1.6"/></svg>
<svg class="a" style="left:339px;top:615px" width="14" height="16" viewBox="339 615 14 16"><path d="M346 617 V628 M341.5 623.5 L346 628 L350.5 623.5" fill="none" stroke="#afb1b3" stroke-width="1.6"/></svg>
<svg class="a" style="left:365px;top:615px" width="16" height="16" viewBox="365 615 16 16"><path d="M366 617 H378 L373.5 622 V629 H370.5 V622 Z" fill="#afb1b3"/></svg>
<div class="a" style="left:387px;top:582px;width:1px;height:335px;background:#47494b"></div>
<div class="a" style="left:388px;top:582px;width:1384px;height:24px;background:#3d4b5c"></div>
<div class="a" style="left:411px;top:586px;line-height:18px;font-size:12px;color:#bbbbbb;transform:scaleX(0.96);transform-origin:0 0">Variables</div>
<svg class="a" style="left:394px;top:587px" width="14" height="14" viewBox="394 587 14 14"><rect x="395" y="589" width="10" height="2.5" fill="#afb1b3"/><rect x="395" y="593" width="10" height="2.5" fill="#afb1b3"/><rect x="395" y="597" width="10" height="2.5" fill="#afb1b3"/></svg>
<svg class="a" style="left:392px;top:614px" width="10" height="10"><path d="M1 0 L8 4.5 L1 9 Z" fill="#9b9b9b"/></svg>
<svg class="a" style="left:411px;top:613px" width="11" height="12"><rect x="0" y="0" width="11" height="2.5" fill="#c39a40"/><rect x="0" y="4.5" width="11" height="2.5" fill="#c39a40"/><rect x="0" y="9" width="11" height="2.5" fill="#c39a40"/></svg>
<div class="tr" style="left:427px;top:608px;color:#bbbbbb"><span style=color:#f0806e>this</span> = <span style="color:#8c8c8c">{JndiRefForwardingDataSource@48926}</span> "com.mchange.v2.c3p0.JndiRefForwardingDataSource@84630b4e [ caching -&gt; true, factoryClassLocation -&gt; null, identityToken -&gt; 1hgf2xca97nmzdl1d8ajpy|51807a03, jndiEnv -&gt; null, jndiName -&gt; ldap://192.168.2.102:1389/Object ]"</div>
<svg class="a" style="left:392px;top:635px" width="10" height="10"><path d="M1 0 L8 4.5 L1 9 Z" fill="#9b9b9b"/></svg>
<svg class="a" style="left:411px;top:634px" width="11" height="12"><rect x="0" y="0" width="11" height="2.5" fill="#c39a40"/><rect x="0" y="4.5" width="11" height="2.5" fill="#c39a40"/><rect x="0" y="9" width="11" height="2.5" fill="#c39a40"/></svg>
<div class="tr" style="left:427px;top:629px;color:#bbbbbb"><span style=color:#f0806e>jndiName</span> = <span style="color:#e6db74">"ldap://192.168.2.102:1389/Object"</span></div>
<svg class="a" style="left:411px;top:655px" width="11" height="12"><rect x="0" y="0" width="11" height="2.5" fill="#c39a40"/><rect x="0" y="4.5" width="11" height="2.5" fill="#c39a40"/><rect x="0" y="9" width="11" height="2.5" fill="#c39a40"/></svg>
<div class="tr" style="left:427px;top:650px;color:#bbbbbb"><span style=color:#f0806e>jndiEnv</span> = null</div>
<svg class="a" style="left:392px;top:677px" width="10" height="10"><path d="M1 0 L8 4.5 L1 9 Z" fill="#9b9b9b"/></svg>
<svg class="a" style="left:411px;top:676px" width="11" height="12"><rect x="0" y="0" width="11" height="2.5" fill="#c39a40"/><rect x="0" y="4.5" width="11" height="2.5" fill="#c39a40"/><rect x="0" y="9" width="11" height="2.5" fill="#c39a40"/></svg>
<div class="tr" style="left:427px;top:671px;color:#bbbbbb"><span style=color:#f0806e>ctx</span> = <span style="color:#8c8c8c">{InitialContext@48941}</span></div>
<div class="a" style="left:32px;top:904px;width:194px;height:8px;background:rgba(190,190,190,0.2)"></div>
<div class="a" style="left:389px;top:904px;width:1254px;height:8px;background:#5c5e60"></div>
<div class="a" style="left:0;top:912px;width:1772px;height:1px;background:#46494b"></div>
<div class="a" style="left:0;top:913px;width:1772px;height:4px;background:#3b3e40"></div>
<div class="a" style="left:1px;top:913px;width:85px;height:4px;background:#2c2e30"></div>
<svg class="a" style="left:1554px;top:889px" width="60" height="18" viewBox="0 0 60 18"><g fill="none" stroke="#f2f2f2" stroke-width="1.15" stroke-linecap="square"><g transform="translate(2,2)"><path d="M6.5 0.3 L7.3 1.6 M1 4.3 V2.6 H13 V4.3 M0.3 7.5 H13.7 M6 3.8 C5 7 4 9.5 2.5 11.3 C6 11.8 9 12.6 11.5 13.8 M10.3 7.5 C9.5 10.5 6 12.8 1 13.8"/></g><g transform="translate(15.5,2)"><path d="M7 0.3 L0.3 6 M7 0.3 L13.7 6 M3 6.8 H11 M2.8 9.8 H11.2 M7 6.8 V13.2 M1 13.3 H13"/></g><g transform="translate(29,2)"><path d="M6.5 0.3 L7.3 1.6 M1 4.3 V2.6 H13 V4.3 M6 3.2 L2.5 6.6 M4.8 4.6 H10 C8.5 6.8 5.5 8.3 1.5 9.2 M6 5.5 C8 7.3 10.5 8.3 13.5 8.8 M3.2 9.8 H10.8 V13.6 H3.2 Z"/></g></g></svg>
<div class="a" style="left:1602px;top:887px;white-space:pre;color:#f2f2f2;font-size:15px;line-height:20px">(</div>
<div class="a" style="left:1611px;top:887px;white-space:pre;color:#f2f2f2;font-size:16px;line-height:20px;transform:scaleX(0.945);transform-origin:0 0">www.anquanke.com</div>
<div class="a" style="left:1751px;top:887px;white-space:pre;color:#f2f2f2;font-size:15px;line-height:20px">)</div>
<div class="a" style="left:1px;top:0;width:1px;height:917px;background:#4b4b4b"></div>
</body></html>
